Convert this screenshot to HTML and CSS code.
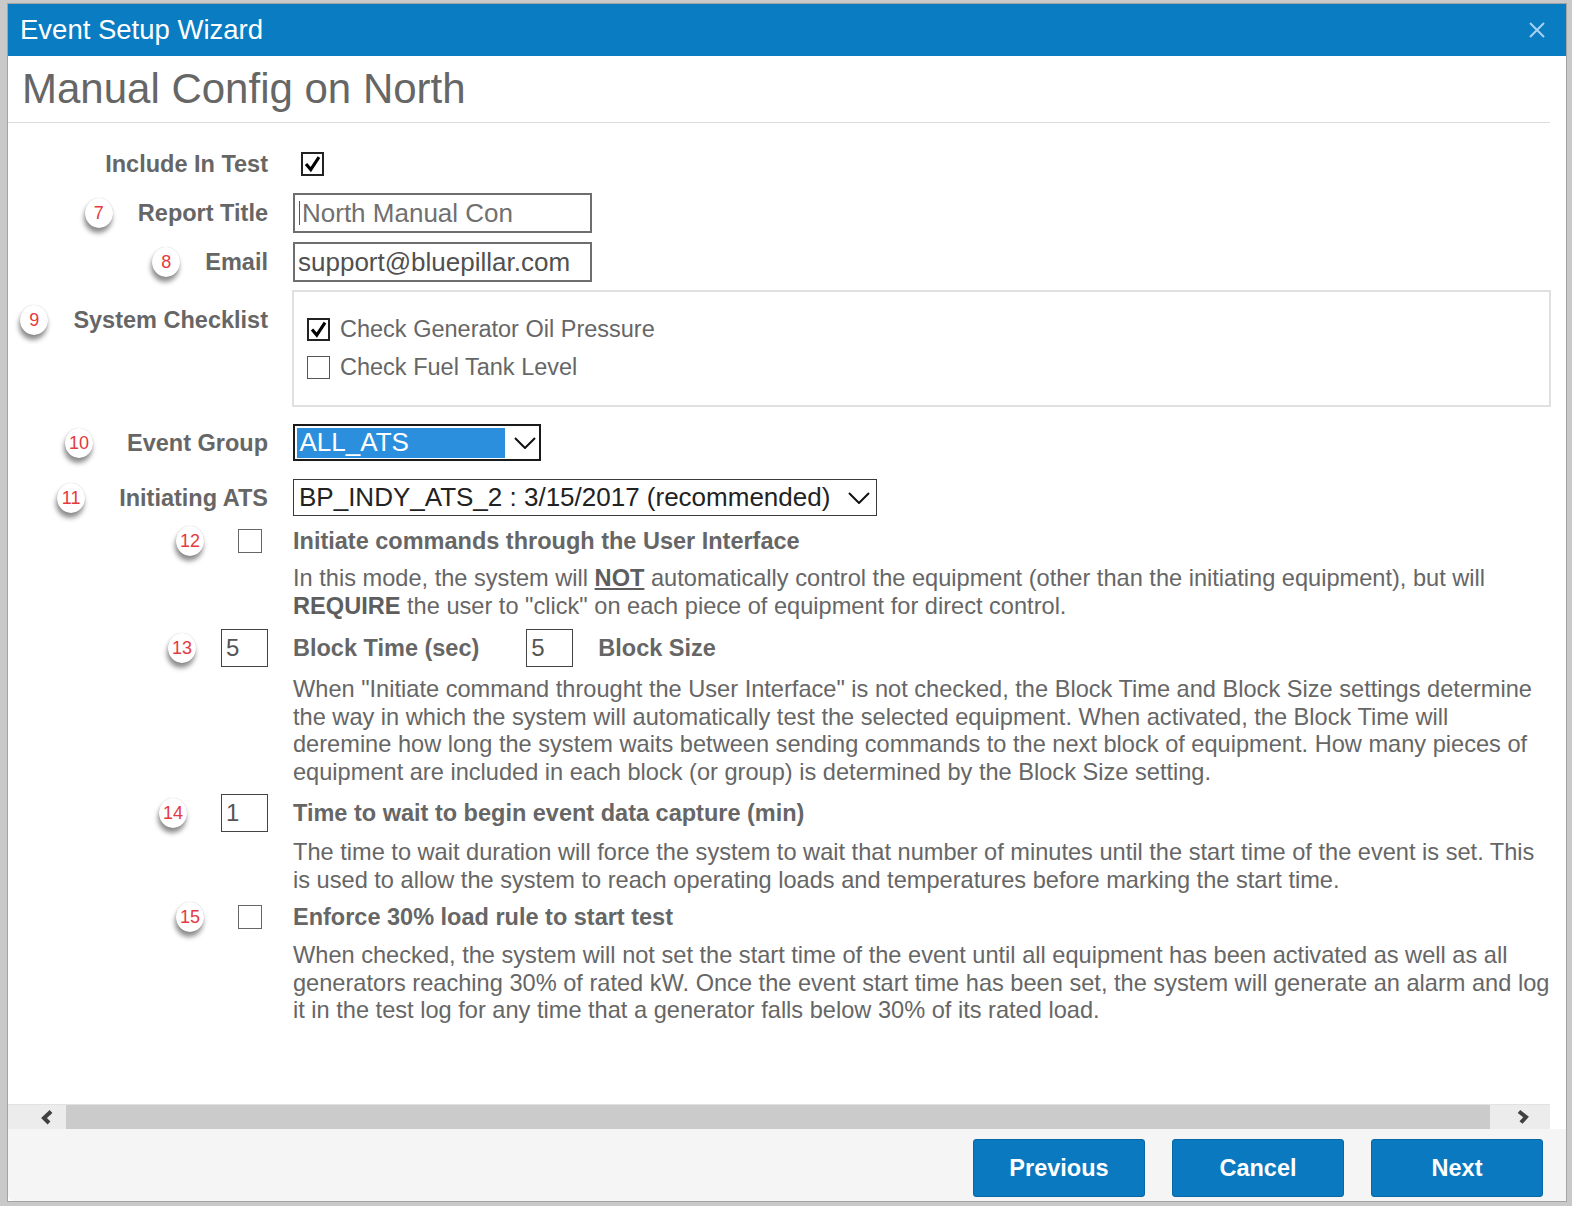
FILE: index.html
```html
<!DOCTYPE html>
<html>
<head>
<meta charset="utf-8">
<title>Event Setup Wizard</title>
<link rel="stylesheet" href="styles.css">
</head>
<body>
<div class="dialog">
  <div class="header">
    <span class="header-title">Event Setup Wizard</span>
    <svg class="close" viewBox="0 0 18 18"><path d="M2 2 L16 16 M16 2 L2 16" stroke="#a6d3f1" stroke-width="2" fill="none"/></svg>
  </div>
  <div class="titlebar"><h1>Manual Config on North</h1></div>

  <div class="form">
    <div class="row r1">
      <div class="lab">Include In Test</div>
      <div class="val"><span class="cb checked include"><svg viewBox="0 0 22 22"><path d="M3.5 11 L9 17.5 L18.5 3" stroke="#000" stroke-width="3.6" fill="none"/></svg></span></div>
    </div>

    <div class="row r2">
      <div class="lab"><span class="badge">7</span>Report Title</div>
      <div class="val"><div class="text-input title-input"><span class="caret"></span>North Manual Con</div></div>
    </div>

    <div class="row r3">
      <div class="lab"><span class="badge">8</span>Email</div>
      <div class="val"><div class="text-input email-input">support@bluepillar.com</div></div>
    </div>

    <div class="row r4">
      <div class="lab"><span class="badge">9</span>System Checklist</div>
      <div class="val checklist">
        <div class="check-item"><span class="cb checked"><svg viewBox="0 0 22 22"><path d="M3.5 11 L9 17.5 L18.5 3" stroke="#000" stroke-width="3.6" fill="none"/></svg></span>Check Generator Oil Pressure</div>
        <div class="check-item"><span class="cb"></span>Check Fuel Tank Level</div>
      </div>
    </div>

    <div class="row r5">
      <div class="lab"><span class="badge far">10</span>Event Group</div>
      <div class="val">
        <div class="select select-eg"><span class="opt">ALL_ATS</span><svg class="chev" viewBox="0 0 22 12"><path d="M1 1 L11 11 L21 1" stroke="#111" stroke-width="2" fill="none"/></svg></div>
      </div>
    </div>

    <div class="row r6">
      <div class="lab"><span class="badge far">11</span>Initiating ATS</div>
      <div class="val">
        <div class="select select-ats"><span>BP_INDY_ATS_2 : 3/15/2017 (recommended)</span><svg class="chev" viewBox="0 0 22 12"><path d="M1 1 L11 11 L21 1" stroke="#111" stroke-width="2" fill="none"/></svg></div>
      </div>
    </div>

    <div class="row r7">
      <div class="lab"><span class="badge far">12</span><span class="cb plain"></span></div>
      <div class="val heading">Initiate commands through the User Interface</div>
    </div>
    <p class="desc d1">In this mode, the system will <b><u>NOT</u></b> automatically control the equipment (other than the initiating equipment), but will<br><b>REQUIRE</b> the user to "click" on each piece of equipment for direct control.</p>

    <div class="row r8">
      <div class="lab"><span class="badge">13</span><span class="num-input">5</span></div>
      <div class="val heading">Block Time (sec)<span class="num-input gap-in">5</span><span class="after-in">Block Size</span></div>
    </div>
    <p class="desc d2">When "Initiate command throught the User Interface" is not checked, the Block Time and Block Size settings determine<br>the way in which the system will automatically test the selected equipment. When activated, the Block Time will<br>deremine how long the system waits between sending commands to the next block of equipment. How many pieces of<br>equipment are included in each block (or group) is determined by the Block Size setting.</p>

    <div class="row r9">
      <div class="lab"><span class="badge far">14</span><span class="num-input">1</span></div>
      <div class="val heading">Time to wait to begin event data capture (min)</div>
    </div>
    <p class="desc d3">The time to wait duration will force the system to wait that number of minutes until the start time of the event is set. This<br>is used to allow the system to reach operating loads and temperatures before marking the start time.</p>

    <div class="row r10">
      <div class="lab"><span class="badge far">15</span><span class="cb plain"></span></div>
      <div class="val heading">Enforce 30% load rule to start test</div>
    </div>
    <p class="desc d4">When checked, the system will not set the start time of the event until all equipment has been activated as well as all<br>generators reaching 30% of rated kW. Once the event start time has been set, the system will generate an alarm and log<br>it in the test log for any time that a generator falls below 30% of its rated load.</p>
  </div>

  <div class="hscroll">
    <div class="sb-btn sb-left"><svg viewBox="0 0 16 16"><path d="M12 2.5 L5 9 L10 14" stroke="#404040" stroke-width="4" fill="none"/></svg></div>
    <div class="sb-thumb"></div>
    <div class="sb-btn sb-right"><svg viewBox="0 0 16 16"><path d="M4 2.5 L11 8 L6 13.5" stroke="#404040" stroke-width="4" fill="none"/></svg></div>
  </div>

  <div class="footer">
    <button class="btn">Previous</button>
    <button class="btn">Cancel</button>
    <button class="btn">Next</button>
  </div>
</div>
</body>
</html>
```

FILE: styles.css
```css
* { box-sizing: border-box; }
html, body { margin: 0; padding: 0; }
body {
  background: #c9c9c9;
  font-family: "Liberation Sans", Arial, sans-serif;
  width: 1572px;
  height: 1206px;
  overflow: hidden;
}
.dialog {
  margin: 3px 5px 0 7px;
  height: 1199px;
  border: 1px solid #a3a3a3;
  background: #fff;
  display: flex;
  flex-direction: column;
}
.header {
  height: 52px;
  flex: none;
  background: #0a7cc2;
  display: flex;
  align-items: center;
  justify-content: space-between;
  padding: 0 20px 0 12px;
}
.header-title { color: #fff; font-size: 27.5px; }
.close { width: 18px; height: 18px; }

.titlebar {
  height: 67px;
  flex: none;
  border-bottom: 1px solid #dcdcdc;
  margin-right: 16px;
  padding-left: 14px;
  display: flex;
  align-items: center;
}
.titlebar h1 { margin: 0; font-weight: normal; font-size: 42px; color: #666; }

.form { flex: 1; min-height: 0; }
.row { display: flex; align-items: center; }
.lab {
  width: 260px;
  flex: none;
  display: flex;
  justify-content: flex-end;
  align-items: center;
  font-weight: bold;
  font-size: 23.5px;
  line-height: 28px;
  color: #666;
}
.val { margin-left: 25px; display: flex; align-items: center; }

.r1 { margin-top: 28px; height: 26px; }
.r2 { margin-top: 16px; height: 40px; }
.r3 { margin-top: 9px; height: 40px; }
.r4 { margin-top: 8px; height: 117px; align-items: flex-start; }
.r4 .lab { padding-top: 15px; }
.r5 { margin-top: 17px; height: 37px; }
.r6 { margin-top: 18px; height: 37px; }
.r7 { margin-top: 11px; height: 28px; }
.r8 { margin-top: 9px; height: 38px; }
.r9 { margin-top: 8px; height: 38px; }
.r10 { margin-top: 9px; height: 28px; }

.badge {
  width: 28px;
  height: 30px;
  border-radius: 50%;
  background: #fff;
  box-shadow: 0 0 1px rgba(0,0,0,0.25), -1px 5px 5px rgba(0,0,0,0.45);
  color: #e5393e;
  font-size: 18px;
  font-weight: normal;
  display: flex;
  align-items: center;
  justify-content: center;
  margin-right: 25px;
  flex: none;
}
.badge.far { margin-right: 34px; }

.cb {
  width: 23px;
  height: 23px;
  border: 1.5px solid #555;
  background: #fff;
  display: inline-flex;
  flex: none;
}
.cb.checked { border: 2px solid #222; }
.cb svg { width: 100%; height: 100%; }
.cb.include { margin-left: 8px; width: 23px; height: 24px; }
.cb.plain { width: 24px; height: 24px; margin-right: 6px; border: 1.5px solid #666; }

.text-input {
  width: 299px;
  height: 40px;
  border: 2px solid #6e6e6e;
  font-size: 26px;
  display: flex;
  align-items: center;
  white-space: nowrap;
  overflow: hidden;
}
.title-input { padding-left: 4px; color: #707070; }
.caret { width: 1px; height: 24px; background: #555; margin-right: 2px; flex: none; }
.email-input { padding-left: 3px; color: #505050; }

.checklist {
  margin-left: 24px;
  width: 1259px;
  height: 117px;
  border: 2px solid #e0e0e0;
  padding: 18px 0 0 13px;
  flex-direction: column;
  align-items: flex-start;
}
.check-item {
  height: 38px;
  display: flex;
  align-items: center;
  font-size: 23.5px;
  color: #666;
}
.check-item .cb { margin-right: 10px; }

.select {
  height: 37px;
  display: flex;
  align-items: center;
  font-size: 26px;
  white-space: nowrap;
}
.select-eg {
  width: 248px;
  border: 2px solid #1a1a1a;
  padding: 1.5px;
}
.select-eg .opt {
  background: #2b8fde;
  color: #fff;
  width: 208px;
  height: 100%;
  padding-left: 3px;
  display: flex;
  align-items: center;
}
.chev { width: 22px; height: 12px; flex: none; }
.select-eg .chev { margin-left: 9px; }
.select-ats {
  width: 584px;
  border: 1.5px solid #3a3a3a;
  padding: 0 6px 0 5px;
  justify-content: space-between;
  color: #222;
}

.heading {
  font-weight: bold;
  font-size: 23.5px;
  line-height: 28px;
  color: #666;
}
.num-input {
  width: 47px;
  height: 38px;
  border: 1.5px solid #444;
  font-size: 24px;
  font-weight: normal;
  color: #555;
  padding-left: 4px;
  display: inline-flex;
  align-items: center;
  flex: none;
}
.gap-in { margin-left: 47px; }
.after-in { margin-left: 25px; }

.desc {
  margin: 0 0 0 285px;
  font-size: 23.6px;
  line-height: 27.5px;
  color: #666;
  white-space: nowrap;
}
.desc b { color: #5e5e5e; }
.d1 { margin-top: 10px; }
.d2 { margin-top: 9px; }
.d3 { margin-top: 7px; }
.d4 { margin-top: 11px; }

.hscroll {
  flex: none;
  height: 25px;
  margin-right: 16px;
  display: flex;
  border-top: 1px solid #e2e2e2;
}
.sb-btn {
  background: #ececec;
  display: flex;
  align-items: center;
}
.sb-btn svg { width: 16px; height: 16px; }
.sb-left { width: 58px; justify-content: flex-end; padding-right: 11px; }
.sb-right { width: 60px; justify-content: center; padding-left: 6px; }
.sb-thumb { flex: 1; background: #cbcbcb; }

.footer {
  flex: none;
  height: 72px;
  background: #f5f5f5;
  display: flex;
  justify-content: flex-end;
  align-items: flex-start;
  gap: 27px;
  padding: 10px 23px 0 0;
  border-bottom-left-radius: 6px;
}
.btn {
  width: 172px;
  height: 58px;
  background: #0a79c0;
  border: 1px solid #0868a5;
  border-radius: 3px;
  color: #fff;
  font-family: "Liberation Sans", Arial, sans-serif;
  font-weight: bold;
  font-size: 23.5px;
  padding: 0;
}
```
